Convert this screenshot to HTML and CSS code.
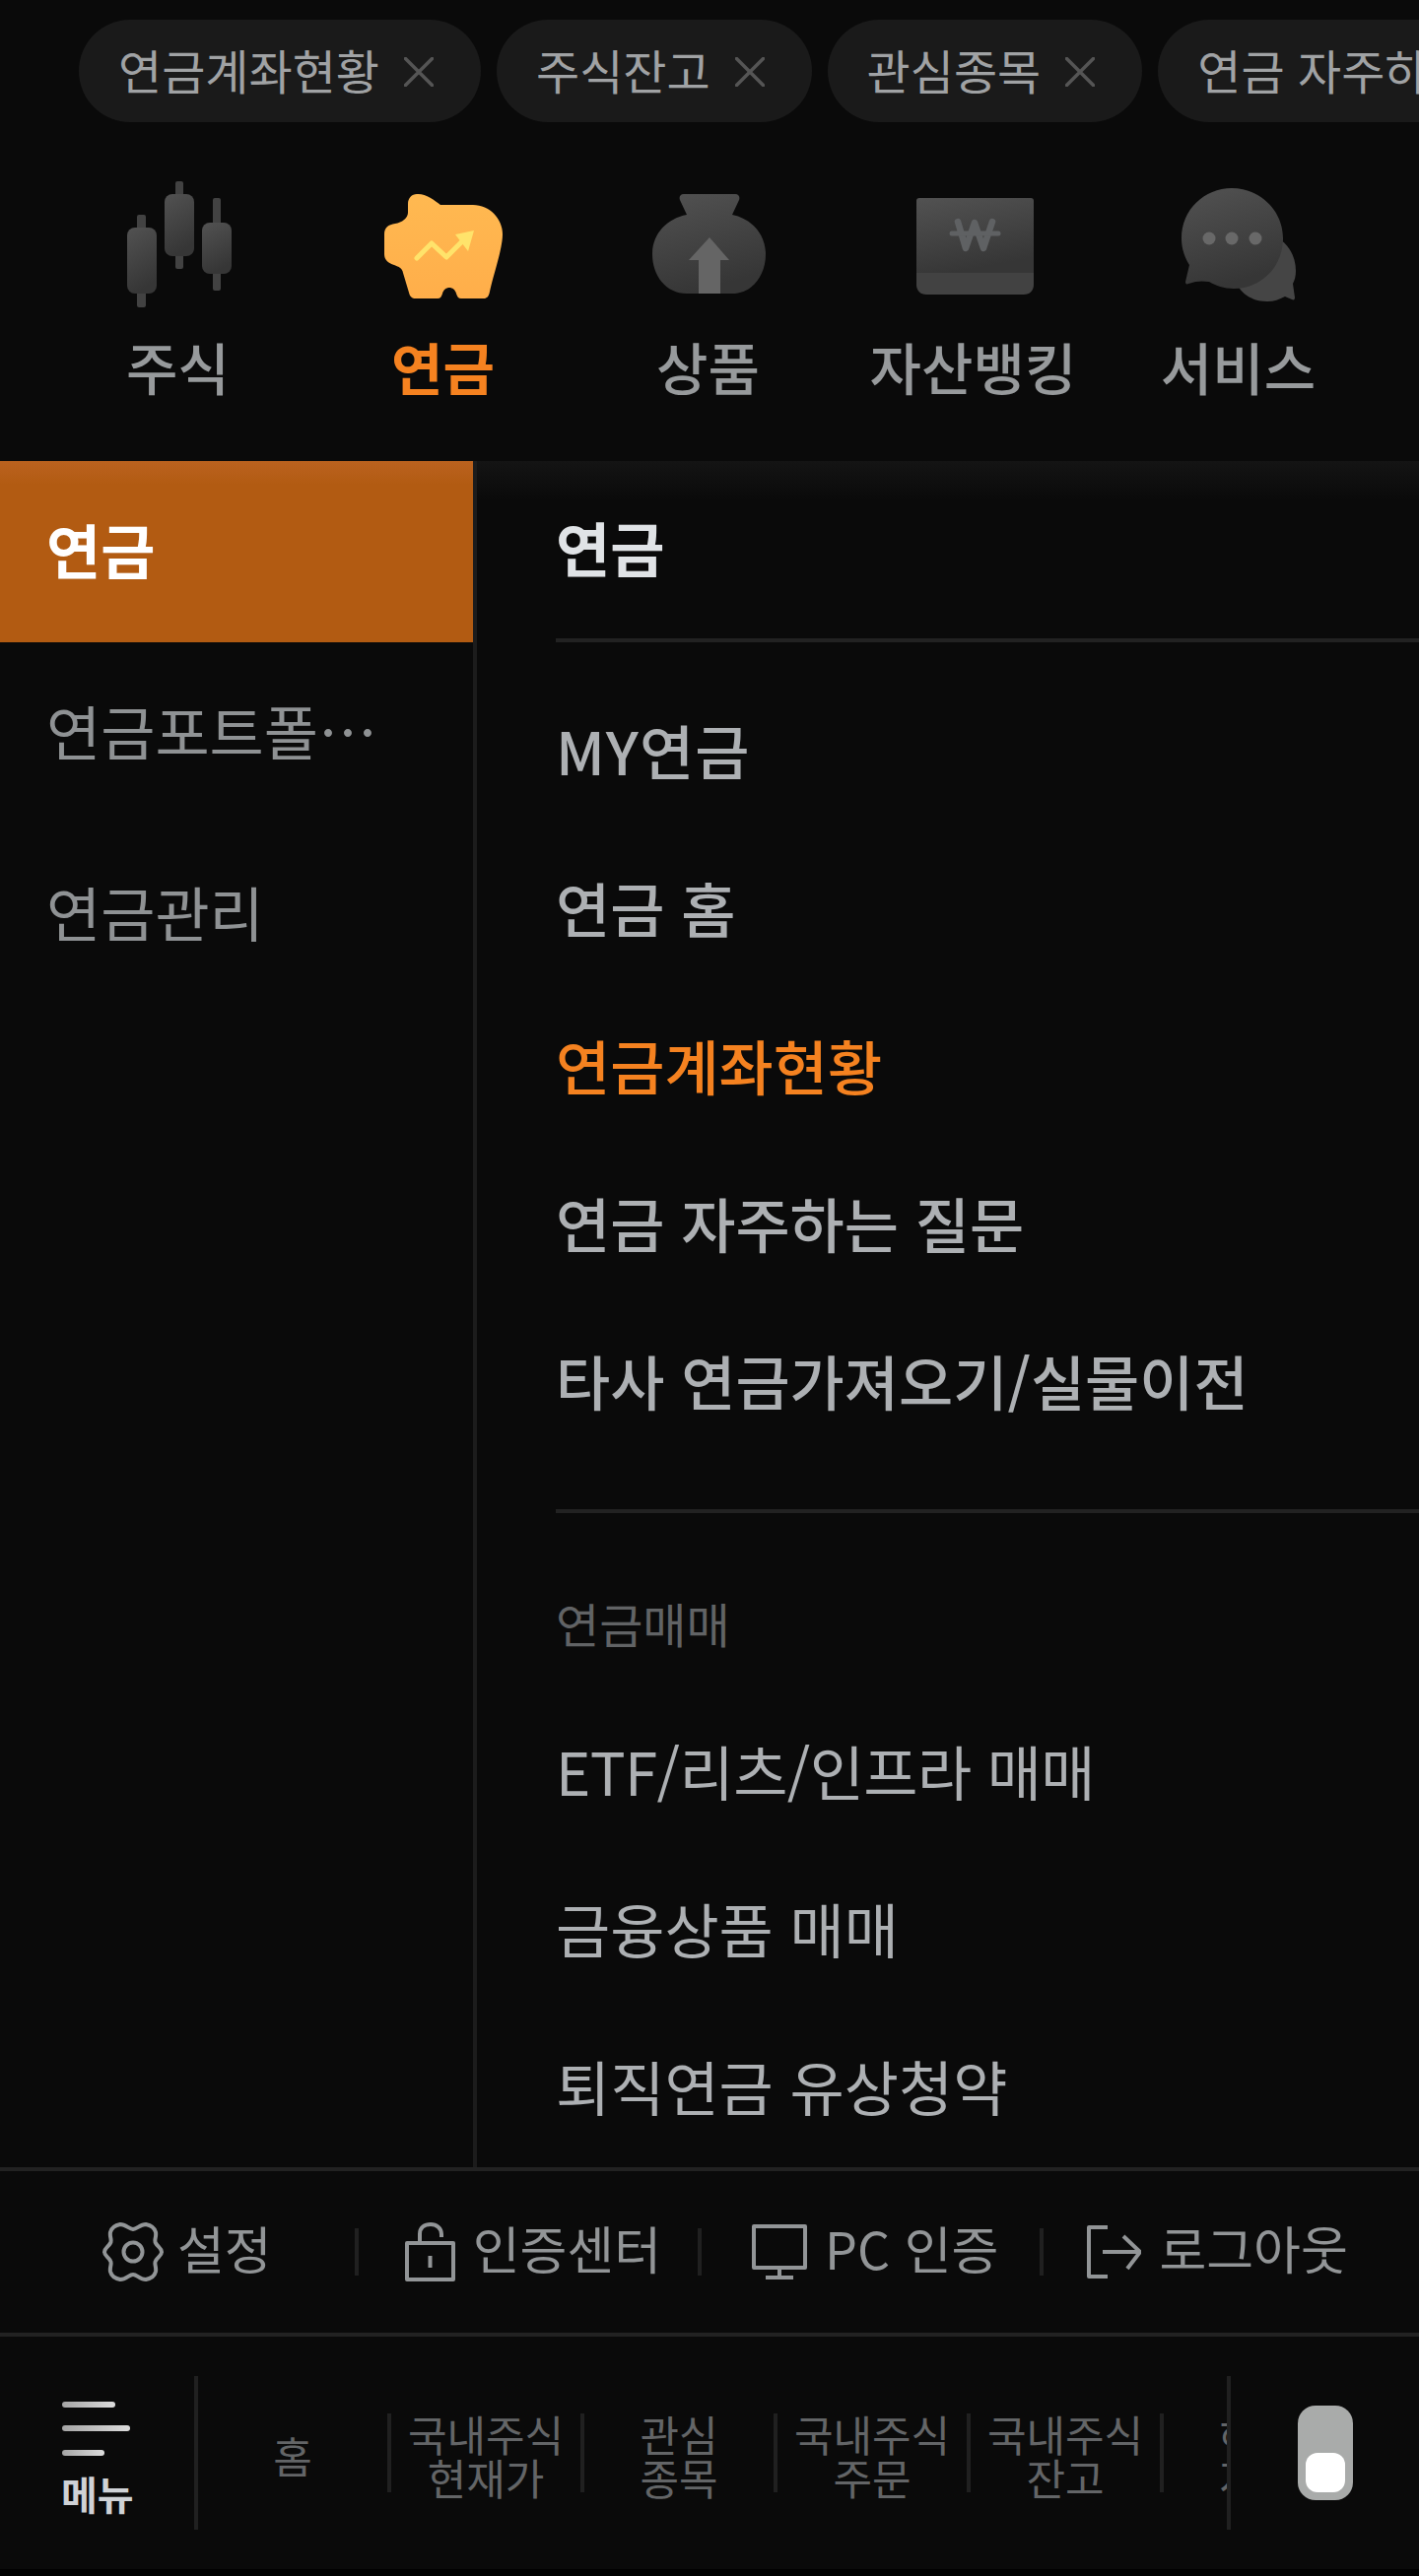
FILE: index.html
```html
<!DOCTYPE html>
<html lang="ko">
<head>
<meta charset="utf-8">
<title>연금 메뉴</title>
<link rel="stylesheet" href="styles.css">
</head>
<body>
<div class="app">
  <div class="tabs">
    <div class="tab"><span>연금계좌현황</span><svg class="x" viewBox="0 0 30 30"><path d="M1.5 1.5 28.5 28.5M28.5 1.5 1.5 28.5"/></svg></div>
    <div class="tab"><span>주식잔고</span><svg class="x" viewBox="0 0 30 30"><path d="M1.5 1.5 28.5 28.5M28.5 1.5 1.5 28.5"/></svg></div>
    <div class="tab"><span>관심종목</span><svg class="x" viewBox="0 0 30 30"><path d="M1.5 1.5 28.5 28.5M28.5 1.5 1.5 28.5"/></svg></div>
    <div class="tab"><span>연금 자주하는 질문</span></div>
  </div>

  <svg width="0" height="0" class="defs">
    <defs>
      <linearGradient id="g" x1="0" y1="0" x2="0.3" y2="1"><stop offset="0" stop-color="#525252"/><stop offset="1" stop-color="#363636"/></linearGradient>
      <linearGradient id="p" x1="0" y1="0" x2="0" y2="1"><stop offset="0" stop-color="#ffb951"/><stop offset="1" stop-color="#ffae4a"/></linearGradient>
      <linearGradient id="b"><stop offset="0" stop-color="#a5a5a5"/><stop offset="1" stop-color="#dcdcdc"/></linearGradient>
    </defs>
  </svg>

  <nav class="cats">
    <div class="cat">
      <svg class="cat-icon" viewBox="0 0 120 120">
        <rect x="19" y="28" width="9" height="94" rx="2" fill="#424242"/>
        <rect x="9" y="41" width="30" height="67" rx="8" fill="url(#g)"/>
        <rect x="58" y="-6" width="8" height="89" rx="2" fill="#424242"/>
        <rect x="47" y="7" width="30" height="63" rx="8" fill="url(#g)"/>
        <rect x="96" y="11" width="8" height="94" rx="2" fill="#424242"/>
        <rect x="85" y="36" width="30" height="52" rx="8" fill="url(#g)"/>
      </svg>
      <span>주식</span>
    </div>
    <div class="cat on">
      <svg class="cat-icon" viewBox="0 0 120 120">
        <path fill="url(#p)" d="M34 7C42 6 52 13 58 18L91 18C108 18 121 32 121 48 121 62 112 88 108 106 107 111 105 113 102 113L79 113C76 113 75 111 74 108 73 104 70 102 67 102 64 102 61 104 60 108 59 111 58 113 55 113L33 113C29 113 27 111 26 107L20 87C19 82 16 81 11 79 5 77 1 74 1 68L1 48C1 41 5 38 12 37 19 36 25 31 25 26 25 23 25 20 25 17 25 11 29 7 34 7z"/>
        <path fill="none" stroke="#ffe36b" stroke-width="5" stroke-linecap="round" stroke-linejoin="round" d="M34 72 49 57 64 71 81 54"/>
        <path fill="#ffe36b" d="M73 48 92 44 86 65z"/>
      </svg>
      <span>연금</span>
    </div>
    <div class="cat">
      <svg class="cat-icon" viewBox="0 0 120 120">
        <path fill="url(#g)" d="M36 7H88C92 7 93 10 92 13L85 28C105 32 119 48 119 68 119 90 105 108 85 108H39C18 108 4 90 4 68 4 48 18 32 39 28L32 13C31 10 32 7 36 7z"/>
        <path fill="#656565" d="M62 51 82 74H73V108H51V74H41z"/>
      </svg>
      <span>상품</span>
    </div>
    <div class="cat">
      <svg class="cat-icon" viewBox="0 0 120 120">
        <path fill="url(#g)" d="M6 11H119C121 11 122 12 122 14V87H3V14C3 12 4 11 6 11z"/>
        <path fill="#424242" d="M3 87H122V99C122 105 118 109 112 109H13C7 109 3 105 3 99z"/>
        <g fill="none" stroke="#5f6163" stroke-linecap="round" stroke-linejoin="round">
          <path stroke-width="6.5" d="M45 35 53 62 62 36 71 62 80 35"/>
          <path stroke-width="5" d="M39 47H86"/>
        </g>
      </svg>
      <span>자산뱅킹</span>
    </div>
    <div class="cat">
      <svg class="cat-icon" viewBox="0 0 120 120">
        <path fill="#454545" d="M60 100 104 54C113 60 119 72 119 85 119 90 118 94 116 98L118 112C118 114 117 115 115 114L108 111C102 114 97 116 90 116 76 116 66 110 60 100z"/>
        <path fill="url(#g)" d="M54 1C82 1 106 23 106 52 106 81 84 103 56 103 46 103 38 100 31 96 24 95 18 95 10 98 8 99 7 98 7 96L11 79C6 71 3 62 3 52 3 23 26 1 54 1z"/>
        <g fill="#686868"><circle cx="31" cy="52" r="6.5"/><circle cx="54" cy="52" r="6.5"/><circle cx="78" cy="52" r="6.5"/></g>
      </svg>
      <span>서비스</span>
    </div>
  </nav>

  <main class="panel">
    <aside class="side">
      <div class="side-item active">연금</div>
      <div class="side-item">연금포트폴리오</div>
      <div class="side-item">연금관리</div>
    </aside>
    <section class="content">
      <h2 class="head">연금</h2>
      <ul class="list main">
        <li class="wide">MY연금</li>
        <li>연금 홈</li>
        <li class="cur">연금계좌현황</li>
        <li>연금 자주하는 질문</li>
        <li>타사 연금가져오기/실물이전</li>
      </ul>
      <h3 class="sub">연금매매</h3>
      <ul class="list light">
        <li class="tight">ETF/리츠/인프라 매매</li>
        <li>금융상품 매매</li>
        <li>퇴직연금 유상청약</li>
      </ul>
    </section>
  </main>

  <div class="tools">
    <div class="tool t1">
      <svg class="tool-icon gear" viewBox="0 0 62 62"><path d="M31 8C35 8 38 3 44 3 49 4 53 7 54 11 55 16 52 19 54 22 56 26 60 27 60 31 60 35 56 36 54 40 52 43 55 46 54 51 53 55 49 58 44 59 38 59 35 54 31 54 27 54 24 59 18 59 13 58 9 55 8 51 7 46 10 43 8 40 6 36 2 35 2 31 2 27 6 26 8 22 10 19 7 16 8 11 9 7 13 4 18 3 24 3 27 8 31 8z"/><circle cx="31" cy="31" r="9.5"/></svg>
      <span class="tool-label">설정</span>
    </div>
    <i class="tool-sep"></i>
    <div class="tool t2">
      <svg class="tool-icon lock" viewBox="0 0 51 60"><path stroke-linejoin="round" d="M2 21H49V58H2zM25.5 34V46M15 21V12C15 5 20 2 26 2 32 2 37 6 37 12V15"/></svg>
      <span class="tool-label">인증센터</span>
    </div>
    <i class="tool-sep"></i>
    <div class="tool t3">
      <svg class="tool-icon mon" viewBox="0 0 56 56"><path stroke-linejoin="round" d="M2 2H54V44H2zM28 44V53M14 54H42"/></svg>
      <span class="tool-label">PC 인증</span>
    </div>
    <i class="tool-sep"></i>
    <div class="tool t4">
      <svg class="tool-icon out" viewBox="0 0 56 54"><path stroke-linejoin="round" d="M22 2H3V52H22M17 27H54M38 11 55 27 42 44"/></svg>
      <span class="tool-label">로그아웃</span>
    </div>
  </div>

  <footer class="dock">
    <div class="menu">
      <svg class="burger" viewBox="0 0 70 55"><rect y="0" width="54" height="6" rx="3" fill="url(#b)"/><rect y="24" width="69" height="6" rx="3" fill="url(#b)"/><rect y="49" width="43" height="6" rx="3" fill="url(#b)"/></svg>
      <span>메뉴</span>
    </div>
    <div class="shortcuts">
      <div class="sc">홈</div>
      <div class="sc">국내주식<br>현재가</div>
      <div class="sc">관심<br>종목</div>
      <div class="sc">국내주식<br>주문</div>
      <div class="sc">국내주식<br>잔고</div>
      <div class="sc">해외<br>자산</div>
    </div>
    <div class="toggle-wrap"><div class="toggle"><div class="knob"></div></div></div>
  </footer>
</div>
</body>
</html>
```
FILE: styles.css
```css
* { box-sizing: border-box; }
html, body { margin: 0; padding: 0; background: #000; }
body { font-family: "Noto Sans CJK KR", "Noto Sans", sans-serif; }
.app { width: 1440px; height: 2608px; background: #0a0a0a; overflow: hidden; display: flex; flex-direction: column; }
.defs { position: absolute; }

.tabs { display: flex; gap: 16px; padding: 20px 0 0 80px; height: 124px; flex: none; overflow: hidden; }
.tab { flex: none; height: 104px; border-radius: 52px; background: #1a1a1a; color: #a0a2a4; font-size: 48px; padding: 0 48px 4px 40px; display: flex; align-items: center; gap: 25px; line-height: 1; white-space: nowrap; }
.x { width: 30px; height: 30px; fill: none; stroke: #555; stroke-width: 3.5; stroke-linecap: round; margin-top: 6px; }

.cats { display: flex; flex: none; height: 344px; padding-left: 46px; }
.cat { width: 269px; flex: none; display: flex; flex-direction: column; align-items: center; color: #979a9c; font-size: 57px; font-weight: 500; line-height: 72px; }
.cat .cat-icon { width: 120px; height: 120px; margin-top: 66px; margin-bottom: 25px; margin-left: -2px; flex: none; overflow: visible; }
.cat.on { color: #f58220; font-weight: 700; }

.panel { flex: none; height: 1732px; display: flex; overflow: hidden; }
.side { width: 484px; flex: none; border-right: 4px solid #1c1c1c; }
.side-item { height: 184px; padding: 0 96px 0 47px; line-height: 178px; font-size: 60px; color: #8f9294; white-space: nowrap; overflow: hidden; text-overflow: ellipsis; }
.side-item.active { background: #b25b12; background-image: linear-gradient(#bb621f, #b25b12 24px); color: #fff; font-weight: 700; }
.content { flex: 1; padding-left: 80px; background-image: linear-gradient(#141414, #0a0a0a 40px); min-width: 0; }
.head { margin: 0; height: 184px; line-height: 174px; font-size: 60px; font-weight: 700; color: #e0e3e6; border-bottom: 4px solid #222; }
.list { list-style: none; margin: 0; padding: 0; }
.list li { height: 160px; line-height: 158px; font-size: 60px; color: #adb0b3; white-space: nowrap; font-weight: 500; }
.list.main { padding: 30px 0 50px; border-bottom: 4px solid #222; }
.list li.wide { letter-spacing: 1px; }
.list li.cur { color: #f58220; }
.list.light li { font-weight: 400; }
.list li.tight { letter-spacing: -0.6px; }
.sub { margin: 0; padding-top: 79px; line-height: 64px; height: 182px; font-size: 48px; font-weight: 400; color: #616365; }

.tools { flex: none; height: 172px; border-top: 4px solid #222; border-bottom: 4px solid #222; display: flex; align-items: center; color: #929597; font-size: 52px; }
.tool { display: flex; align-items: center; white-space: nowrap; line-height: 64px; }
.tool-label { padding-bottom: 8px; }
.tool-icon { fill: none; stroke: #929597; stroke-width: 4; flex: none; }
.tool-icon.gear { width: 62px; height: 62px; margin-right: 14px; }
.tool-icon.lock { width: 51px; height: 60px; margin-right: 18px; }
.tool-icon.mon { width: 56px; height: 56px; margin-right: 18px; }
.tool-icon.out { width: 56px; height: 54px; margin-right: 18px; }
.tool-sep { width: 4px; height: 48px; background: #202020; flex: none; }
.t1 { margin-left: 104px; margin-right: 84px; }
.t2 { margin-left: 47px; margin-right: 37px; }
.t3 { margin-left: 51px; margin-right: 42px; }
.t4 { margin-left: 43px; }

.dock { flex: none; height: 236px; display: flex; align-items: center; }
.menu { width: 201px; height: 156px; flex: none; border-right: 4px solid #202020; display: flex; flex-direction: column; align-items: flex-start; padding-left: 62px; color: #cfd2d6; font-size: 40px; font-weight: 700; line-height: 48px; }
.burger { width: 70px; height: 55px; margin-top: 26px; margin-bottom: 14px; margin-left: 1px; flex: none; }
.shortcuts { width: 1044px; flex: none; display: flex; overflow: hidden; height: 156px; align-items: center; }
.sc { width: 196px; flex: none; height: 80px; display: flex; align-items: center; justify-content: center; text-align: center; font-size: 43px; line-height: 44px; color: #636567; border-right: 4px solid #202020; white-space: nowrap; padding-top: 3px; }
.toggle-wrap { flex: 1; height: 156px; border-left: 4px solid #202020; display: flex; align-items: center; justify-content: center; }
.toggle { width: 56px; height: 96px; border-radius: 18px; background: #a9abaa; padding: 48px 8px 8px; }
.knob { width: 40px; height: 40px; border-radius: 12px; background: #fff; }
```
